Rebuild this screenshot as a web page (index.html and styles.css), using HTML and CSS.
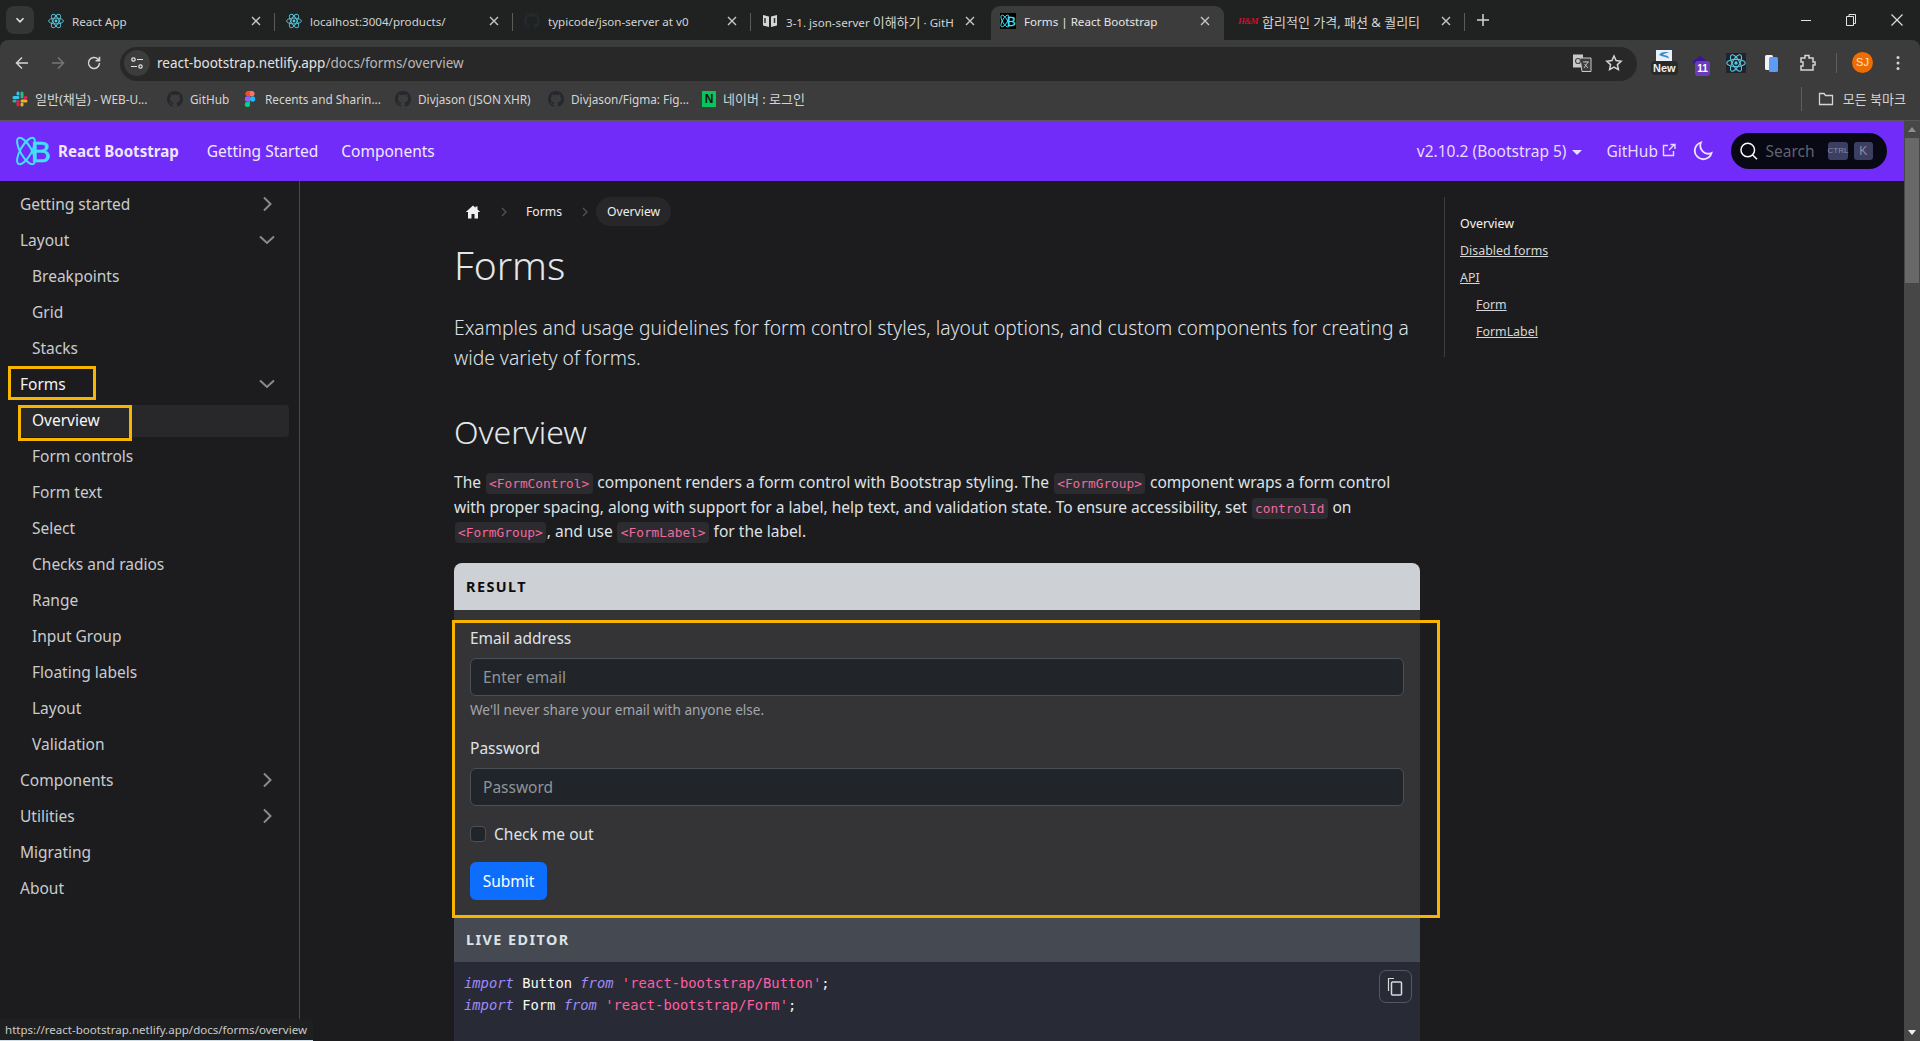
FILE: index.html
```html
<!DOCTYPE html>
<html lang="en">
<head>
    <meta charset="UTF-8">
    <meta name="viewport" content="width=device-width, initial-scale=1.0">
    <title>Forms | React Bootstrap</title>
    <link rel="stylesheet" href="styles.css">
</head>
<body>
    <svg class="defs" width="0" height="0">
        <symbol id="atom" viewBox="0 0 16 16">
            <g fill="none" stroke="#58c4dc" stroke-width="0.9">
                <ellipse cx="8" cy="8" rx="7.4" ry="2.9"/>
                <ellipse cx="8" cy="8" rx="7.4" ry="2.9" transform="rotate(60 8 8)"/>
                <ellipse cx="8" cy="8" rx="7.4" ry="2.9" transform="rotate(-60 8 8)"/>
            </g>
            <circle cx="8" cy="8" r="1.4" fill="#58c4dc"/>
        </symbol>
        <symbol id="github" viewBox="0 0 16 16">
            <path fill="#24292f" d="M8 0C3.58 0 0 3.58 0 8c0 3.54 2.29 6.53 5.47 7.59.4.07.55-.17.55-.38 0-.19-.01-.82-.01-1.49-2.01.37-2.53-.49-2.69-.94-.09-.23-.48-.94-.82-1.13-.28-.15-.68-.52-.01-.53.63-.01 1.08.58 1.23.82.72 1.21 1.87.87 2.33.66.07-.52.28-.87.51-1.07-1.78-.2-3.64-.89-3.64-3.95 0-.87.31-1.59.82-2.15-.08-.2-.36-1.02.08-2.12 0 0 .67-.21 2.2.82.64-.18 1.32-.27 2-.27.68 0 1.36.09 2 .27 1.53-1.04 2.2-.82 2.2-.82.44 1.1.16 1.92.08 2.12.51.56.82 1.27.82 2.15 0 3.07-1.87 3.75-3.65 3.95.29.25.54.73.54 1.48 0 1.07-.01 1.93-.01 2.2 0 .21.15.46.55.38A8.013 8.013 0 0016 8c0-4.42-3.58-8-8-8z"/>
        </symbol>
        <symbol id="x" viewBox="0 0 16 16">
            <path d="M4 4l8 8M12 4l-8 8" fill="none" stroke="#c7c7c7" stroke-width="1.4"/>
        </symbol>
        <symbol id="chev-right" viewBox="0 0 16 16">
            <path d="M5 1.5L11.5 8 5 14.5" fill="none" stroke="#8a8a8c" stroke-width="2"/>
        </symbol>
        <symbol id="chev-down" viewBox="0 0 16 16">
            <path d="M1 4.5L8 11l7-6.5" fill="none" stroke="#8a8a8c" stroke-width="2"/>
        </symbol>
        <symbol id="crumb-sep" viewBox="0 0 6 10">
            <path d="M1 1l4 4-4 4" fill="none" stroke="#55565a" stroke-width="1.2"/>
        </symbol>
    </svg>

    <header class="browser">
        <div class="tabstrip">
            <button class="tab-search"><svg width="10" height="10" viewBox="0 0 10 10"><path d="M1.5 3.2L5 6.8l3.5-3.6" fill="none" stroke="#e3e3e3" stroke-width="1.5"/></svg></button>
            <div class="tab">
                <svg class="favicon"><use href="#atom"/></svg>
                <span class="tab-title">React App</span>
                <svg class="tab-close"><use href="#x"/></svg>
            </div>
            <div class="tab">
                <svg class="favicon"><use href="#atom"/></svg>
                <span class="tab-title">localhost:3004/products/</span>
                <svg class="tab-close"><use href="#x"/></svg>
            </div>
            <div class="tab">
                <svg class="favicon"><use href="#github"/></svg>
                <span class="tab-title">typicode/json-server at v0</span>
                <svg class="tab-close"><use href="#x"/></svg>
            </div>
            <div class="tab tab-before-active">
                <svg class="favicon" viewBox="0 0 16 16"><path d="M1 2l6 1.5V14L1 12.5zM15 2L9 3.5V14l6-1.5z" fill="#d5d5d5"/><path d="M3 5v5M12.5 5v5" stroke="#333" stroke-width="1.5"/></svg>
                <span class="tab-title">3-1. json-server <span class="ko">이해하기</span> · GitH</span>
                <svg class="tab-close"><use href="#x"/></svg>
            </div>
            <div class="tab tab-active">
                <svg class="favicon favicon-box" viewBox="0 0 36 34"><use href="#rb-logo"/></svg>
                <span class="tab-title">Forms | React Bootstrap</span>
                <svg class="tab-close"><use href="#x"/></svg>
            </div>
            <div class="tab tab-last">
                <span class="favicon hm-mark">H&amp;M</span>
                <span class="tab-title ko">합리적인 가격, 패션 &amp; 퀄리티</span>
                <svg class="tab-close"><use href="#x"/></svg>
            </div>
            <svg class="new-tab" width="14" height="14" viewBox="0 0 14 14"><path d="M7 1v12M1 7h12" stroke="#d5d5d5" stroke-width="1.5"/></svg>
            <div class="win-controls">
                <svg width="12" height="12" viewBox="0 0 12 12"><path d="M1 6.5h10" stroke="#e3e3e3"/></svg>
                <svg width="12" height="14" viewBox="0 0 12 14"><path d="M1.5 3.5h7v9h-7zM4 3.5v-2h6.5v9h-2" fill="none" stroke="#e3e3e3"/></svg>
                <svg width="14" height="14" viewBox="0 0 14 14"><path d="M1.5 1.5l11 11M12.5 1.5l-11 11" stroke="#e3e3e3" stroke-width="1.1"/></svg>
            </div>
        </div>

        <div class="toolbar">
            <button class="tool-btn"><svg width="16" height="16" viewBox="0 0 16 16"><path d="M14 8H2.5M8 2.5L2.5 8 8 13.5" fill="none" stroke="#d5d5d5" stroke-width="1.5"/></svg></button>
            <button class="tool-btn"><svg width="16" height="16" viewBox="0 0 16 16"><path d="M2 8h11.5M8 2.5L13.5 8 8 13.5" fill="none" stroke="#767676" stroke-width="1.5"/></svg></button>
            <button class="tool-btn"><svg width="16" height="16" viewBox="0 0 16 16"><path d="M13.5 8a5.5 5.5 0 1 1-1.6-3.9L13.5 5.7M13.5 1.8v3.9H9.6" fill="none" stroke="#d5d5d5" stroke-width="1.5"/></svg></button>
            <div class="omnibox">
                <span class="site-info"><svg width="14" height="14" viewBox="0 0 14 14"><g fill="none" stroke="#e3e3e3" stroke-width="1.2"><circle cx="3.5" cy="3.5" r="1.7"/><circle cx="10.5" cy="10.5" r="1.7"/><path d="M7 3.5h6M1 10.5h6"/></g></svg></span>
                <span class="url">react-bootstrap.netlify.app<span class="url-path">/docs/forms/overview</span></span>
                <svg class="omni-icon" width="20" height="20" viewBox="0 0 20 20"><path d="M1 1.5h10v13H1z" fill="#c9c9c9"/><path d="M8 5h11v13.5H10z" fill="#3c3c3c" stroke="#c9c9c9"/><circle cx="6" cy="8" r="2.5" fill="none" stroke="#444" stroke-width="1.2"/><path d="M11 9h6M14 8v1M12 15l4-6M12.5 11l3.5 4" fill="none" stroke="#c9c9c9" stroke-width="0.9"/></svg>
                <svg class="omni-icon omni-star" width="18" height="18" viewBox="0 0 18 18"><path d="M9 2l2.1 4.6 5 .6-3.7 3.4 1 5L9 13.1l-4.4 2.5 1-5L1.9 7.2l5-.6z" fill="none" stroke="#d5d5d5" stroke-width="1.5"/></svg>
            </div>
            <button class="tool-btn ext-new">
                <svg width="16" height="12" viewBox="0 0 16 12"><path d="M0 0h16v12H0z" fill="#e8f1fa"/><path d="M3 5c3-4 8-3 10-2-3 0-5 .5-6 2 3 0 6 1 6 3.5-3-1.5-7-2-10-3.5z" fill="#3a8cc9"/></svg>
                <span class="ext-badge">New</span>
            </button>
            <button class="tool-btn ext-purple">
                <svg width="18" height="14" viewBox="0 0 18 14"><path d="M9 0l8 6-8 6-8-6z" fill="#3d1399"/></svg>
                <span class="ext-count">11</span>
            </button>
            <button class="tool-btn"><svg class="ext-react" width="20" height="20"><use href="#atom"/></svg></button>
            <button class="tool-btn"><svg width="18" height="20" viewBox="0 0 18 20"><rect x="2" y="2" width="8" height="15" rx="1.5" fill="#f1f3f4"/><rect x="6" y="4" width="9" height="15" rx="1.5" fill="#5d9cf5"/></svg></button>
            <button class="tool-btn"><svg width="18" height="20" viewBox="0 0 18 20"><path d="M2 5h4V2.5h4V5h4v4h2v3h-2v5H2v-4h2V9H2z" fill="none" stroke="#d5d5d5" stroke-width="1.5"/></svg></button>
            <span class="tool-sep"></span>
            <span class="avatar">SJ</span>
            <button class="tool-btn"><svg width="4" height="16" viewBox="0 0 4 16"><g fill="#d5d5d5"><circle cx="2" cy="2.5" r="1.5"/><circle cx="2" cy="8" r="1.5"/><circle cx="2" cy="13.5" r="1.5"/></g></svg></button>
        </div>

        <div class="bookmarks">
            <a class="bookmark bm-slack">
                <svg width="16" height="16" viewBox="0 0 16 16"><g stroke-width="3" stroke-linecap="round"><path d="M2 6.5h4" stroke="#36c5f0"/><path d="M6 2v1" stroke="#36c5f0"/><path d="M10 2v4" stroke="#2eb67d"/><path d="M14 6.5h-1" stroke="#e01e5a"/><path d="M14 10h-4" stroke="#ecb22e"/><path d="M10 14v-1" stroke="#ecb22e"/><path d="M6 14v-4" stroke="#e01e5a"/><path d="M2 10h1" stroke="#2eb67d"/></g></svg>
                <span><span class="ko">일반(채널)</span> - WEB-U...</span>
            </a>
            <a class="bookmark bm-github"><svg width="16" height="16"><use href="#github"/></svg><span>GitHub</span></a>
            <a class="bookmark bm-figma">
                <svg width="16" height="16" viewBox="0 0 16 16"><path d="M8 0H5.5a2.7 2.7 0 0 0 0 5.3H8z" fill="#f24e1e"/><path d="M8 0h2.5a2.7 2.7 0 0 1 0 5.3H8z" fill="#ff7262"/><path d="M8 5.3H5.5a2.7 2.7 0 0 0 0 5.4H8z" fill="#a259ff"/><circle cx="10.6" cy="8" r="2.65" fill="#1abcfe"/><path d="M8 10.7H5.5A2.65 2.65 0 1 0 8 13.4z" fill="#0acf83"/></svg>
                <span>Recents and Sharin...</span>
            </a>
            <a class="bookmark bm-div"><svg width="16" height="16"><use href="#github"/></svg><span>Divjason (JSON XHR)</span></a>
            <a class="bookmark bm-fig"><svg width="16" height="16"><use href="#github"/></svg><span>Divjason/Figma: Fig...</span></a>
            <a class="bookmark"><span class="naver">N</span><span class="ko">네이버 : 로그인</span></a>
            <span class="bm-spacer"></span>
            <span class="tool-sep bm-sep"></span>
            <a class="bookmark bm-all">
                <svg width="16" height="16" viewBox="0 0 16 16"><path d="M1.5 2.5H6l1.5 2h7v9h-13z" fill="none" stroke="#d5d5d5" stroke-width="1.3"/></svg>
                <span class="ko">모든 북마크</span>
            </a>
        </div>
    </header>

    <div class="viewport">
        <div class="site">
            <nav class="navbar">
                <a class="brand">
                    <svg class="brand-logo" width="36" height="34" viewBox="0 0 36 34">
                        <g id="rb-logo">
                            <g fill="none" stroke="#41e0fd" stroke-width="2">
                                <ellipse cx="11" cy="17" rx="15" ry="5.5" transform="rotate(60 11 17)"/>
                                <ellipse cx="11" cy="17" rx="15" ry="5.5" transform="rotate(-60 11 17)"/>
                            </g>
                            <text class="brand-b" x="16" y="28">B</text>
                        </g>
                    </svg>
                    <span>React Bootstrap</span>
                </a>
                <a class="nav-link">Getting Started</a>
                <a class="nav-link">Components</a>
                <span class="nav-spacer"></span>
                <a class="nav-link version">v2.10.2 (Bootstrap 5)<span class="caret"></span></a>
                <a class="nav-link github">GitHub
                    <svg width="14" height="14" viewBox="0 0 14 14"><path d="M11.5 8v4.5h-10v-10H6M7 7l5.5-5.5M8.5 1.5H13V6" fill="none" stroke="#e6d9ff" stroke-width="1.4"/></svg>
                </a>
                <svg class="moon" width="20" height="20" viewBox="0 0 20 20"><path d="M8 1.5a8.5 8.5 0 1 0 10.500 10.500A8 8 0 0 1 8 1.5z" fill="none" stroke="#eee6ff" stroke-width="1.8"/></svg>
                <div class="search-pill">
                    <svg width="20" height="20" viewBox="0 0 20 20"><circle cx="9" cy="9" r="7" fill="none" stroke="#fff" stroke-width="1.5"/><path d="M14 14l4.5 4.5" stroke="#fff" stroke-width="1.5"/></svg>
                    <span class="search-text">Search</span>
                    <kbd class="key key-ctrl">CTRL</kbd>
                    <kbd class="key">K</kbd>
                </div>
            </nav>

            <div class="site-body">
                <aside class="sidebar">
                    <a class="side-item">Getting started<svg class="chev"><use href="#chev-right"/></svg></a>
                    <a class="side-item">Layout<svg class="chev"><use href="#chev-down"/></svg></a>
                    <a class="side-item sub">Breakpoints</a>
                    <a class="side-item sub">Grid</a>
                    <a class="side-item sub">Stacks</a>
                    <a class="side-item is-open">Forms<svg class="chev"><use href="#chev-down"/></svg><span class="mark mark-forms"></span></a>
                    <a class="side-item sub is-active">Overview<span class="mark mark-overview"></span></a>
                    <a class="side-item sub">Form controls</a>
                    <a class="side-item sub">Form text</a>
                    <a class="side-item sub">Select</a>
                    <a class="side-item sub">Checks and radios</a>
                    <a class="side-item sub">Range</a>
                    <a class="side-item sub">Input Group</a>
                    <a class="side-item sub">Floating labels</a>
                    <a class="side-item sub">Layout</a>
                    <a class="side-item sub">Validation</a>
                    <a class="side-item">Components<svg class="chev"><use href="#chev-right"/></svg></a>
                    <a class="side-item">Utilities<svg class="chev"><use href="#chev-right"/></svg></a>
                    <a class="side-item">Migrating</a>
                    <a class="side-item">About</a>
                </aside>

                <main class="content">
                    <div class="breadcrumbs">
                        <a class="crumb crumb-home"><svg width="16" height="16" viewBox="0 0 16 16"><path d="M8 1.5L.8 8H3v6.5h3.5V10h3v4.5H13V8h2.2L12.5 5.6V2.5h-2v1.3z" fill="#f0f0f0"/></svg></a>
                        <svg class="crumb-chev crumb-chev-a"><use href="#crumb-sep"/></svg>
                        <a class="crumb">Forms</a>
                        <svg class="crumb-chev"><use href="#crumb-sep"/></svg>
                        <a class="crumb crumb-active">Overview</a>
                    </div>
                    <h1>Forms</h1>
                    <p class="lead">Examples and usage guidelines for form control styles, layout options, and custom components for creating a wide variety of forms.</p>
                    <h2>Overview</h2>
                    <p class="intro">The <code>&lt;FormControl&gt;</code> component renders a form control with Bootstrap styling. The <code>&lt;FormGroup&gt;</code> component wraps a form control with proper spacing, along with support for a label, help text, and validation state. To ensure accessibility, set <code>controlId</code> on <code>&lt;FormGroup&gt;</code>, and use <code>&lt;FormLabel&gt;</code> for the label.</p>

                    <section class="example">
                        <div class="example-head result-head">RESULT</div>
                        <form class="example-body">
                            <label class="field-label">Email address</label>
                            <input class="field" type="email" placeholder="Enter email">
                            <div class="field-help">We'll never share your email with anyone else.</div>
                            <label class="field-label">Password</label>
                            <input class="field" type="password" placeholder="Password">
                            <label class="check-row"><span class="check-box"></span>Check me out</label>
                            <button class="submit" type="button">Submit</button>
                            <span class="mark mark-form"></span>
                        </form>
                        <div class="example-head editor-head">LIVE EDITOR</div>
                        <div class="editor">
                            <div><i>import</i> Button <i>from</i> <b>'react-bootstrap/Button'</b>;</div>
                            <div><i>import</i> Form <i>from</i> <b>'react-bootstrap/Form'</b>;</div>
                            <button class="copy-btn" type="button"><svg width="17" height="19" viewBox="0 0 17 19"><path d="M7 1.5H1.5V14" fill="none" stroke="#d7d9dd" stroke-width="1.2"/><rect x="4.5" y="5" width="10" height="13" rx="1" fill="none" stroke="#d7d9dd" stroke-width="1.5"/></svg></button>
                        </div>
                    </section>
                </main>

                <aside class="toc">
                    <a class="toc-link is-current">Overview</a>
                    <a class="toc-link">Disabled forms</a>
                    <a class="toc-link">API</a>
                    <a class="toc-link toc-sub">Form</a>
                    <a class="toc-link toc-sub">FormLabel</a>
                </aside>
            </div>
        </div>

        <div class="scrollbar">
            <span class="scroll-arrow scroll-up"></span>
            <span class="scroll-thumb"></span>
            <span class="scroll-track"></span>
            <span class="scroll-arrow scroll-down"></span>
        </div>
    </div>

    <div class="status-bubble">https://react-bootstrap.netlify.app/docs/forms/overview</div>
</body>
</html>
```

FILE: styles.css
```css
* {
    box-sizing: border-box;
}
html, body {
    margin: 0;
    height: 100%;
}
body {
    display: flex;
    flex-direction: column;
    overflow: hidden;
    background: #1c1c1e;
    color: #dee2e6;
    font-family: "Noto Sans", "Noto Sans CJK KR", sans-serif;
    font-size: 15.5px;
}
a {
    color: inherit;
}
button {
    font-family: inherit;
}
.defs {
    position: absolute;
}

/* browser frame */
.browser {
    flex: none;
    height: 121px;
    background: #202222;
    border-bottom: 1px solid #575757;
}
.tabstrip {
    display: flex;
    align-items: flex-end;
    height: 40px;
    padding-left: 6px;
}
.tab-search {
    align-self: flex-start;
    display: flex;
    align-items: center;
    justify-content: center;
    width: 28px;
    height: 28px;
    margin: 6px 3px 0 0;
    padding: 0;
    background: #343636;
    border: none;
    border-radius: 8px;
}
.tab {
    position: relative;
    display: flex;
    align-items: center;
    flex: none;
    width: 238px;
    height: 34px;
    padding: 0 11px 4px 11px;
    color: #d3d3d3;
    font-size: 11.6px;
}
.tab::after {
    content: "";
    position: absolute;
    right: 0;
    top: 7px;
    height: 18px;
    border-right: 1px solid #5a5a5a;
}
.tab-before-active::after, .tab-active::after {
    display: none;
}
.tab-active {
    width: 233px;
    margin: 0 3px 0 2px;
    padding-left: 9px;
    background: #3c3c3c;
    border-radius: 9px 9px 0 0;
    color: #e6e6e6;
}
.favicon {
    flex: none;
    width: 16px;
    height: 16px;
    margin-right: 8px;
}
.favicon-box {
    background: #000;
}
.hm-mark {
    width: 18px;
    margin-right: 6px;
    color: #c8102e;
    font: italic bold 9px "Liberation Serif", serif;
    letter-spacing: -0.8px;
    line-height: 16px;
    white-space: nowrap;
}
.tab-title {
    flex: 1;
    min-width: 0;
    overflow: hidden;
    white-space: nowrap;
}
.tab-title.ko, .tab-title .ko {
    font-size: 13px;
}
.tab-close {
    flex: none;
    width: 16px;
    height: 16px;
    margin-left: 2px;
}
.new-tab {
    align-self: center;
    margin-left: 11px;
    margin-top: -1px;
}
.win-controls {
    align-self: center;
    display: flex;
    gap: 33px;
    align-items: center;
    margin-left: auto;
    margin-top: -1px;
    padding-right: 16px;
}

.toolbar {
    display: flex;
    align-items: center;
    height: 41px;
    padding: 0 4px;
    background: #3c3c3c;
    border-radius: 8px 8px 0 0;
}
.tool-btn {
    position: relative;
    display: flex;
    align-items: center;
    justify-content: center;
    flex: none;
    width: 36px;
    height: 34px;
    margin-top: 4px;
    padding: 0;
    background: none;
    border: none;
}
.omnibox {
    display: flex;
    align-items: center;
    flex: 1;
    height: 34px;
    margin: 6px 9px 0 8px;
    padding: 0 14px 2px 4px;
    background: #282828;
    border-radius: 17px;
    color: #e3e3e3;
    font-size: 13.5px;
}
.site-info {
    display: flex;
    align-items: center;
    justify-content: center;
    width: 26px;
    height: 26px;
    margin-right: 7px;
    background: #3c3c3c;
    border-radius: 50%;
}
.url {
    flex: 1;
}
.url-path {
    color: #b8b8b8;
}
.omni-icon {
    margin-left: 13px;
}
.ext-new {
    flex-direction: column;
    justify-content: flex-start;
    padding-top: 4px;
}
.ext-badge {
    position: absolute;
    top: 15px;
    left: 5px;
    padding: 1px 2px;
    background: #2a2a2a;
    border-radius: 4px;
    color: #efefef;
    font: bold 11px "Liberation Sans", sans-serif;
}
.ext-count {
    position: absolute;
    top: 15px;
    left: 13px;
    width: 15px;
    height: 15px;
    background: #6a3db8;
    border-radius: 3px;
    color: #fff;
    font: bold 10px/15px "Liberation Sans", sans-serif;
    text-align: center;
}
.ext-react {
    background: #20232a;
}
.tool-sep {
    flex: none;
    width: 1px;
    height: 20px;
    margin: 4px 10px 0;
    background: #5e5e5e;
}
.avatar {
    flex: none;
    width: 21px;
    height: 21px;
    margin: 4px 7px 0 5px;
    background: #ee6c00;
    border-radius: 50%;
    color: #fde4cd;
    font: 11px/21px "Liberation Sans", sans-serif;
    text-align: center;
}

.bookmarks {
    display: flex;
    align-items: center;
    height: 39px;
    padding: 0 14px 4px 12px;
    background: #3c3c3c;
    color: #d5d5d5;
    font-size: 11.8px;
}
.bookmarks .ko {
    font-size: 13px;
}
.bookmark {
    display: flex;
    align-items: center;
    gap: 7px;
    white-space: nowrap;
}
.bm-slack { width: 155px; }
.bm-github { width: 75px; }
.bm-figma { width: 153px; }
.bm-div { width: 153px; }
.bm-fig { width: 154px; }
.bm-all { gap: 9px; }
.naver {
    display: block;
    width: 14px;
    height: 16px;
    background: #03c75a;
    color: #111;
    font: bold 12px/16px "Liberation Sans", sans-serif;
    text-align: center;
}
.bm-spacer {
    flex: 1;
}
.bm-sep {
    height: 24px;
    margin: 0 16px 0 0;
}

/* site */
.viewport {
    flex: 1;
    min-height: 0;
    display: flex;
}
.site {
    flex: 1;
    min-width: 0;
    display: flex;
    flex-direction: column;
}
.navbar {
    flex: none;
    display: flex;
    align-items: center;
    height: 60px;
    padding: 0 17px 0 15px;
    background: #712cf9;
    color: #f0e9ff;
}
.brand {
    display: flex;
    align-items: center;
    gap: 7px;
    margin-right: 28px;
    color: #eee6ff;
    font-weight: 700;
    font-size: 15.1px;
}
.brand-b {
    fill: #41e0fd;
    stroke: #41e0fd;
    stroke-width: 0.6px;
    font: 400 30px "Liberation Sans", sans-serif;
}
.nav-link {
    margin-right: 23px;
    white-space: nowrap;
}
.nav-spacer {
    flex: 1;
}
.version {
    margin-right: 24px;
    color: #e8dcff;
}
.caret {
    display: inline-block;
    margin-left: 6px;
    vertical-align: 2px;
    border-top: 5px solid #e8dcff;
    border-left: 5px solid transparent;
    border-right: 5px solid transparent;
}
.github {
    margin-right: 17px;
    color: #e8dcff;
}
.moon {
    margin-right: 18px;
}
.search-pill {
    display: flex;
    align-items: center;
    width: 156px;
    height: 36px;
    padding: 0 8px;
    background: #080914;
    border-radius: 18px;
}
.search-text {
    margin: 0 13px 0 7px;
    color: #60626e;
}
.key {
    width: 20px;
    height: 18px;
    margin-right: 6px;
    background: #3c3f62;
    border-radius: 3px;
    color: #8a8da6;
    font: 12px/18px "Liberation Sans", sans-serif;
    text-align: center;
}
.key-ctrl {
    font-size: 8px;
}

.site-body {
    flex: 1;
    min-height: 0;
    display: flex;
}
.sidebar {
    flex: none;
    width: 300px;
    padding: 8px 10px 0 0;
    border-right: 1px solid #4b4b4d;
}
.side-item {
    position: relative;
    display: flex;
    align-items: center;
    justify-content: space-between;
    height: 32px;
    margin-bottom: 4px;
    padding: 0 14px 1.5px 20px;
    border-radius: 4px;
    color: #c8cbcf;
}
.sub {
    margin-left: 19px;
    padding-left: 13px;
}
.is-open {
    color: #f2f2f2;
}
.is-active {
    background: #28282b;
    color: #f6f6f6;
}
.chev {
    width: 16px;
    height: 16px;
}
.mark {
    position: absolute;
    border: 3px solid #f7b500;
    pointer-events: none;
}
.mark-forms {
    left: 8px;
    top: -3px;
    width: 88px;
    height: 34px;
}
.mark-overview {
    left: -1px;
    top: 0;
    width: 114px;
    height: 36px;
}

.content {
    flex: none;
    width: 1120px;
    padding: 16px 0 0 154px;
}
.breadcrumbs {
    display: flex;
    align-items: center;
    height: 29px;
    margin-left: 3px;
    font-size: 12.2px;
}
.crumb {
    display: flex;
    align-items: center;
    height: 29px;
    padding: 0 11px;
    border-radius: 15px;
    color: #eeeeee;
}
.crumb-home {
    padding: 0 8px;
}
.crumb-active {
    background: #27272a;
}
.crumb-chev {
    width: 6px;
    height: 10px;
    margin: 0 8px 0 9px;
}
.crumb-chev-a {
    margin: 0 8px 0 12px;
}
h1 {
    margin: 15px 0 0;
    font-size: 39px;
    font-weight: 300;
    line-height: 48px;
    color: #e4e7ea;
}
.lead {
    margin: 24px 0 0;
    font-size: 19.28px;
    font-weight: 300;
    line-height: 30px;
}
h2 {
    margin: 40px 0 0;
    font-size: 32px;
    font-weight: 300;
    line-height: 38px;
    color: #e4e7ea;
}
.intro {
    margin: 19px 0 0;
    font-size: 15.55px;
    line-height: 24.5px;
}
code {
    margin: 0 0.5px;
    padding: 3px 3.5px;
    background: #2c2c30;
    border-radius: 4px;
    color: #ef6a9e;
    font-family: "DejaVu Sans Mono", monospace;
    font-size: 12.8px;
    line-height: 1;
}

.example {
    margin-top: 19px;
}
.example-head {
    display: flex;
    align-items: center;
    padding-left: 12px;
    font-size: 14.4px;
    font-weight: 700;
    letter-spacing: 0.1em;
}
.result-head {
    height: 47px;
    background: #cdd0d4;
    border-radius: 8px 8px 0 0;
    color: #0c0c0c;
}
.editor-head {
    height: 45px;
    background: #454a52;
    color: #dee2e6;
}
.example-body {
    position: relative;
    display: block;
    padding: 16px 16px 17px;
    background: #343436;
}
.field-label {
    display: block;
    height: 24px;
    line-height: 24px;
    margin-bottom: 8px;
}
.field {
    display: block;
    width: 100%;
    height: 38px;
    padding: 0 12px;
    background: #212529;
    border: 1px solid #495057;
    border-radius: 6px;
    font-family: inherit;
    font-size: 15.5px;
    color: #dee2e6;
}
.field::placeholder {
    color: #8f9499;
    opacity: 1;
}
.field-help {
    height: 20px;
    margin: 4px 0 16px;
    color: #a2a6ab;
    font-size: 13.6px;
    line-height: 20px;
}
.check-row {
    display: flex;
    align-items: center;
    gap: 8px;
    height: 24px;
    margin: 16px 0;
}
.check-box {
    width: 16px;
    height: 16px;
    background: #212529;
    border: 1px solid #495057;
    border-radius: 4px;
}
.submit {
    display: block;
    width: 77px;
    height: 38px;
    padding: 0;
    background: #0d6efd;
    border: none;
    border-radius: 6px;
    color: #fff;
    font-size: 15.5px;
}
.mark-form {
    left: -2px;
    top: 10px;
    width: 988px;
    height: 298px;
}
.editor {
    position: relative;
    height: 120px;
    padding: 10px;
    background: #282a36;
    color: #f8f8f2;
    font-family: "DejaVu Sans Mono", monospace;
    font-size: 13.8px;
    line-height: 22.5px;
}
.editor i {
    color: #a28bfa;
}
.editor b {
    font-weight: 400;
    color: #ff5fa2;
}
.copy-btn {
    position: absolute;
    top: 8px;
    right: 8px;
    display: flex;
    align-items: center;
    justify-content: center;
    width: 33px;
    height: 33px;
    padding: 0;
    background: none;
    border: 1px solid #555862;
    border-radius: 7px;
}

.toc {
    flex: none;
    align-self: flex-start;
    width: 300px;
    height: 160px;
    margin: 16px 0 0 24px;
    padding: 13px 0 0 15px;
    border-left: 1px solid #3d3d40;
    font-size: 12.4px;
}
.toc-link {
    display: block;
    height: 27px;
    line-height: 27px;
    text-decoration: underline;
    color: #d6d6d6;
}
.toc-sub {
    margin-left: 16px;
}
.is-current {
    text-decoration: none;
    color: #f4f4f4;
}

.scrollbar {
    flex: none;
    display: flex;
    flex-direction: column;
    align-items: center;
    width: 16px;
    background: #474747;
}
.scroll-arrow {
    flex: none;
    margin: 6px 0;
    border-left: 4px solid transparent;
    border-right: 4px solid transparent;
}
.scroll-up {
    border-bottom: 5px solid #8e8e8e;
}
.scroll-down {
    border-top: 5px solid #f0f0f0;
}
.scroll-thumb {
    flex: none;
    width: 14px;
    height: 145px;
    background: #686868;
}
.scroll-track {
    flex: 1;
}
.status-bubble {
    position: absolute;
    left: 0;
    bottom: 0;
    width: 313px;
    height: 22px;
    padding-left: 5px;
    background: #1e1f20;
    border-radius: 0 5px 0 0;
    border-bottom: 1px solid #cfe0ea;
    color: #c9c9c9;
    font-size: 11.55px;
    line-height: 21px;
    white-space: nowrap;
}
```
